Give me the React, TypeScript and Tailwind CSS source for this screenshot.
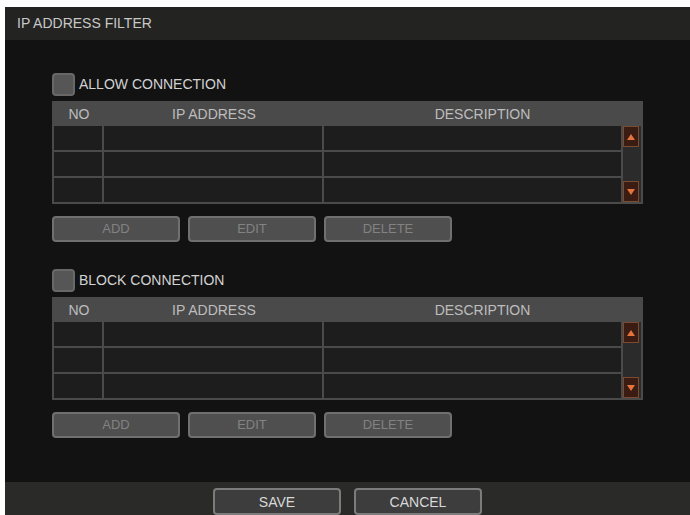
const font = { fontFamily: '"Liberation Sans", Arial, sans-serif' };

function ScrollArrow({ dir }: { dir: "up" | "down" }) {
  return (
    <div className="flex h-[21px] w-[16px] items-center justify-center border border-[#7a4a32] bg-[#3a1c12]">
      <svg width="10" height="8" viewBox="0 0 10 8">
        {dir === "up" ? (
          <polygon points="5,1 9,7 1,7" fill="#e2743c" />
        ) : (
          <polygon points="1,1 9,1 5,7" fill="#e2743c" />
        )}
      </svg>
    </div>
  );
}

function FilterTable() {
  const rows = [0, 1, 2];
  return (
    <div className="w-[591px] bg-[#4a4a4a] px-[2px] pb-[2px]">
      <div className="grid h-[25px] grid-cols-[50px_220px_1fr] items-center pt-[2px] text-[14px] text-[#bdbdbd]">
        <span className="text-center">NO</span>
        <span className="text-center">IP ADDRESS</span>
        <span className="text-center">DESCRIPTION</span>
      </div>
      <div className="grid grid-cols-[48px_218px_297px_18px] grid-rows-[24px_24px_24px] gap-[2px]">
        {rows.map((r) => (
          <div key={r} className="contents">
            <div className="bg-[#1d1d1d]" />
            <div className="bg-[#1d1d1d]" />
            <div className="bg-[#1d1d1d]" />
          </div>
        ))}
        <div className="col-start-4 row-span-3 row-start-1 flex flex-col justify-between bg-[#2b2b2b] pr-[2px]">
          <ScrollArrow dir="up" />
          <ScrollArrow dir="down" />
        </div>
      </div>
    </div>
  );
}

function ActionButton({ label }: { label: string }) {
  return (
    <button className="h-[26px] w-[128px] rounded-[4px] border-2 border-[#707070] bg-[#4f4f4f] text-[13px] text-[#828282]">
      {label}
    </button>
  );
}

function Section({ label, className }: { label: string; className?: string }) {
  return (
    <div className={className}>
      <div className="flex h-[23px] items-center gap-[4px]">
        <div className="h-[23px] w-[23px] rounded-[4px] border-2 border-[#686868] bg-[#565656]" />
        <span className="text-[14px] text-[#d2d2d2]">{label}</span>
      </div>
      <div className="mt-[5px]">
        <FilterTable />
      </div>
      <div className="mt-[12px] flex gap-[8px]">
        <ActionButton label="ADD" />
        <ActionButton label="EDIT" />
        <ActionButton label="DELETE" />
      </div>
    </div>
  );
}

export default function App() {
  return (
    <div className="h-[515px] w-[690px] overflow-hidden bg-white pl-[5px] pt-[7px]" style={font}>
      <div className="flex h-[508px] w-[685px] flex-col">
        <div className="flex h-[33px] shrink-0 items-center bg-[#232322] px-[12px] text-[14px] text-[#c8c8c8]">
          IP ADDRESS FILTER
        </div>
        <div className="flex-1 bg-[#121212] pl-[47px] pt-[33px]">
          <Section label="ALLOW CONNECTION" />
          <Section label="BLOCK CONNECTION" className="mt-[27px]" />
        </div>
        <div className="flex h-[33px] shrink-0 justify-center gap-[13px] overflow-hidden bg-[#2a2a28] pt-[6px]">
          <button className="h-[27px] w-[128px] rounded-[4px] border-2 border-[#7c7c7c] bg-[#3d3d3d] pt-[1px] text-[14px] text-[#d8d8d8]">
            SAVE
          </button>
          <button className="h-[27px] w-[128px] rounded-[4px] border-2 border-[#7c7c7c] bg-[#3d3d3d] pt-[1px] text-[14px] text-[#d8d8d8]">
            CANCEL
          </button>
        </div>
      </div>
    </div>
  );
}
